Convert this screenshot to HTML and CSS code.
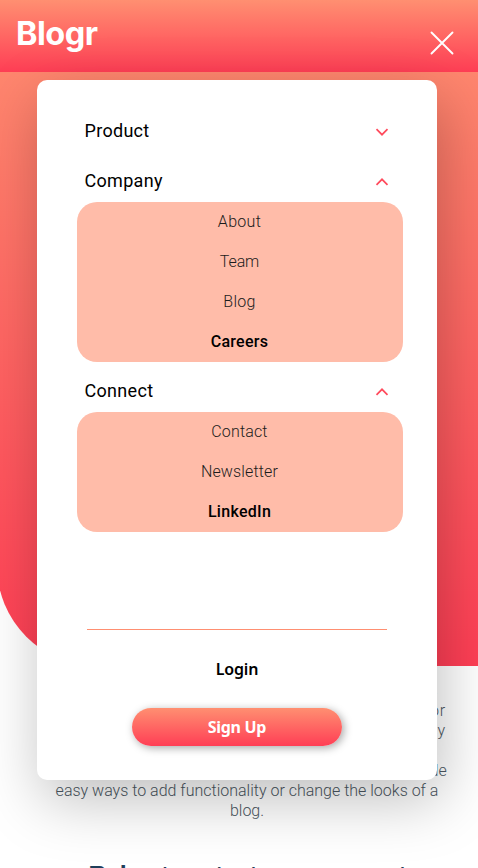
FILE: index.html
```html
<!DOCTYPE html>
<html lang="en">
<head>
<meta charset="utf-8">
<title>Blogr</title>
<link rel="stylesheet" href="styles.css">
</head>
<body>
<div class="hero">
  <header class="header">
    <a class="logo">Blogr</a>
    <svg class="close" width="24" height="24" viewBox="0 0 24 24"><path d="M1.5 1.5l21 21M22.5 1.5l-21 21"/></svg>
  </header>
</div>
<main class="content">
  <p class="copy">
    <span class="l1">Blogr features an exceedingly intuitive interface which lets</span>
    <span class="l2">you focus on one thing: creating content. The editor</span>
    <span class="l3">supports management of multiple blogs and allows easy</span>
    <span class="l4">manipulation of embeds such as images, videos, and</span>
    <span class="l5">Markdown. Extensibility with plugins and themes provide</span>
    <span class="l6">easy ways to add functionality or change the looks of a</span>
    <span>blog.</span>
  </p>
  <h2 class="title">Robust content management</h2>
</main>
<nav class="menu">
  <div class="row"><span>Product</span><svg class="arrow" width="14" height="10" viewBox="0 0 14 10"><path d="M1.5 2.2l5.5 5.5 5.5-5.5"/></svg></div>
  <div class="row"><span>Company</span><svg class="arrow" width="14" height="10" viewBox="0 0 14 10"><path d="M1.5 7.8L7 2.3l5.5 5.5"/></svg></div>
  <ul class="sub">
    <li>About</li><li class="team">Team</li><li>Blog</li><li class="strong">Careers</li>
  </ul>
  <div class="row"><span>Connect</span><svg class="arrow" width="14" height="10" viewBox="0 0 14 10"><path d="M1.5 7.8L7 2.3l5.5 5.5"/></svg></div>
  <ul class="sub">
    <li class="contact">Contact</li><li class="contact">Newsletter</li><li class="strong">LinkedIn</li>
  </ul>
  <div class="account">
    <a class="login">Login</a>
    <a class="signup">Sign Up</a>
  </div>
</nav>
</body>
</html>
```
FILE: styles.css
```css
* { box-sizing: border-box; }
html, body { height: 868px; overflow: hidden; }
body { margin: 0; background: #fff; font-family: Roboto, "Liberation Sans", sans-serif; }
.hero {
  height: 666px;
  margin-left: -3px;
  padding-left: 3px;
  border-bottom-left-radius: 100px;
  background: linear-gradient(#ff8f71, #ff3e55);
}
.header {
  display: flex;
  justify-content: space-between;
  height: 72px;
  margin-left: -3px;
  padding: 14px 24px 0 19px;
  background: linear-gradient(#ff8f71, #ff3e55);
}
.logo { color: #fff; font: 700 32.5px/40px Inter, sans-serif; letter-spacing: -.5px; }
.close { margin-top: 17px; fill: none; stroke: #fff; stroke-width: 1.9; stroke-linecap: round; }
.content { padding: 15px 0 0 16px; text-align: center; }
.copy { margin: 0; color: #4c5862; font-size: 16px; font-weight: 300; line-height: 20px; }
.copy span { display: block; white-space: nowrap; }
.copy .l1 { letter-spacing: -.4px; }
.copy .l2 { letter-spacing: .75px; }
.copy .l5 { letter-spacing: .08px; }
.title { margin: 36px 0 0; color: #1f3e5a; font: 700 25px/36px "Liberation Sans", sans-serif; letter-spacing: -1.1px; }
.menu {
  position: absolute;
  left: 37px;
  top: 80px;
  width: 400px;
  height: 700px;
  padding: 24px 34.5px 0 39.5px;
  border-radius: 10px;
  background: #fff;
  box-shadow: 5px 20px 60px rgba(0, 0, 0, .25);
}
.row { display: flex; justify-content: space-between; height: 50px; padding: 2px 13.5px 0 8px; align-items: center; font-size: 18px; letter-spacing: .3px; }
.row + .sub { margin-top: -2px; }
.arrow { margin-top: 3px; fill: none; stroke: #ff4a5c; stroke-width: 1.7; }
.sub { list-style: none; margin: 0 0 2px; padding: 0; border-radius: 20px; background: #ffbca9; text-align: center; font-size: 16px; font-weight: 300; color: #1c1c1c; }
.sub li { height: 40px; line-height: 39px; letter-spacing: .3px; }
.sub .team { letter-spacing: -.1px; }
.sub .contact { letter-spacing: .15px; }
.sub .strong { font-weight: 500; color: #000; }
.account { display: flex; flex-direction: column; align-items: center; width: 300px; margin: 97px 0 0 10.5px; border-top: 1px solid #ff8f71; font-family: "Noto Sans", sans-serif; font-size: 16px; }
.login { margin-top: 27px; line-height: 24px; font-weight: 600; letter-spacing: -.2px; }
.signup { width: 210px; height: 38px; margin-top: 27px; border-radius: 19px; background: linear-gradient(#ff8f71, #ff3e55); color: #fff; text-align: center; font-weight: 700; line-height: 38px; letter-spacing: -.3px; box-shadow: 2px 2px 8px rgba(0, 0, 0, .35); }
```
